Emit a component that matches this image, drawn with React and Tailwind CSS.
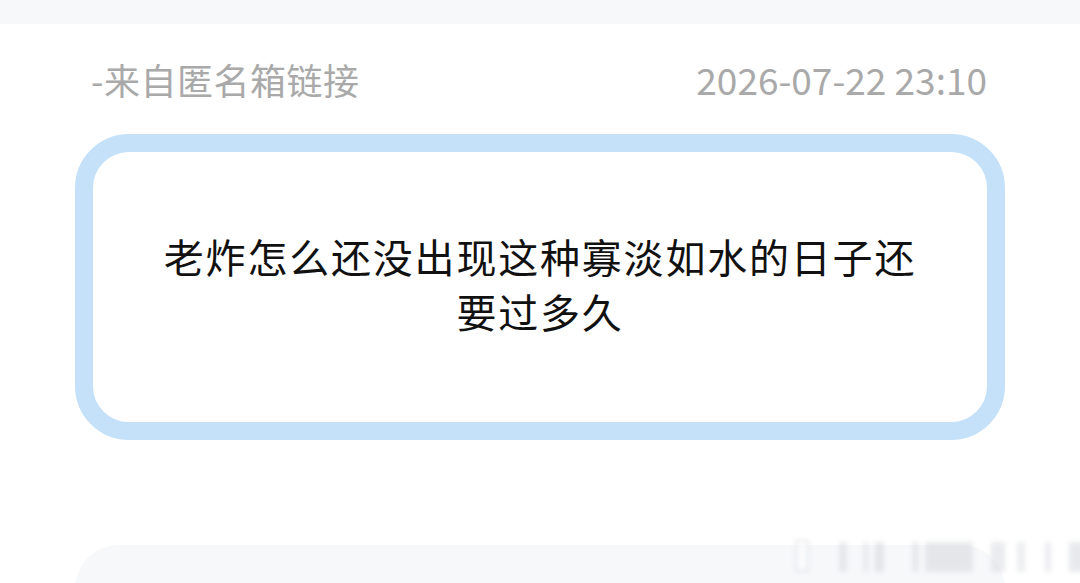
export default function App() {
  return (
    <div
      className="w-[1080px] h-[583px] overflow-hidden bg-white relative"
      style={{ fontFamily: '"Noto Sans CJK SC", "Noto Sans", sans-serif' }}
    >
      {/* strip left over from the previous card */}
      <div className="h-[24px] bg-[#f7f8fa]" />

      <div className="px-[75px]">
        {/* source + time */}
        <div className="flex items-center justify-between pl-[16px] pr-[18px] pt-[20px] h-[90px]">
          <span className="text-[36px] leading-none text-[#a9a9a9] tracking-[0.5px]">-来自匿名箱链接</span>
          <span className="text-[37px] leading-none text-[#a9a9a9]">2026-07-22 23:10</span>
        </div>

        {/* question bubble */}
        <div className="mt-[20px] h-[306px] rounded-[54px] border-[18px] border-[#c5e1f9] bg-white flex items-center justify-center">
          <p className="w-[770px] text-center text-[40px] leading-[55px] tracking-[1.8px] text-[#111] -mt-[6px]">
            老炸怎么还没出现这种寡淡如水的日子还要过多久
          </p>
        </div>

        {/* next card peeking in */}
        <div className="mt-[105px] h-[80px] rounded-t-[44px] bg-[#f7f8fa]" />
      </div>

      {/* faded watermark */}
      <div className="absolute left-[795px] top-[540px] flex items-end gap-[6px] blur-[2.5px] opacity-50">
        <div className="w-[14px] h-[32px] border-2 border-[#cfd2d8] bg-white" />
        <div className="w-[8px] h-[30px] bg-[#d4d6db] ml-[24px]" />
        <div className="w-[6px] h-[30px] bg-[#dcdee2] ml-[10px]" />
        <div className="w-[9px] h-[30px] bg-[#d0d2d7]" />
        <div className="w-[7px] h-[30px] bg-[#d8dadf] ml-[22px]" />
        <div className="w-[48px] h-[30px] bg-[#d3d5da]" />
        <div className="w-[14px] h-[30px] bg-[#d6d8dd] ml-[12px]" />
        <div className="w-[8px] h-[30px] bg-[#dcdee2] ml-[6px]" />
        <div className="w-[6px] h-[30px] bg-[#d8dadf] ml-[14px]" />
        <div className="w-[22px] h-[30px] bg-[#d3d5da] ml-[12px]" />
      </div>
    </div>
  );
}
